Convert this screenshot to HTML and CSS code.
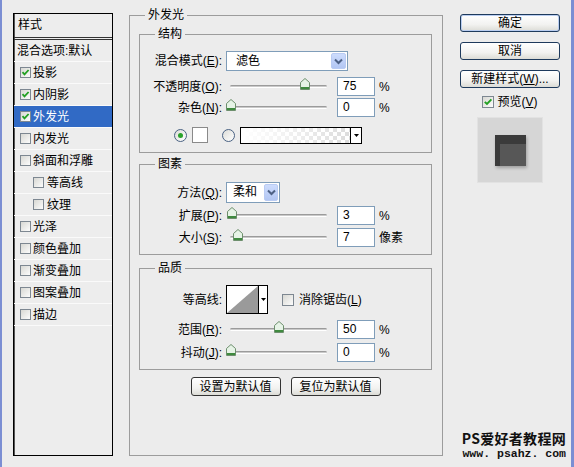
FILE: index.html
```html
<!DOCTYPE html>
<html lang="zh-CN">
<head>
<meta charset="utf-8">
<title>图层样式</title>
<link rel="stylesheet" href="styles.css">
</head>
<body>
<div class="frame">
  <div class="dialog">
    <div class="styles-list">
      <div class="list-head">样式</div>
      <div class="list-row plain">混合选项:默认</div>
      <div class="list-row"><span class="cb"><svg width="9" height="9" viewBox="0 0 9 9"><polyline points="1.5,4.2 3.5,6.4 7.6,2" fill="none" stroke="#22a022" stroke-width="1.8"/></svg></span>投影</div>
      <div class="list-row"><span class="cb"><svg width="9" height="9" viewBox="0 0 9 9"><polyline points="1.5,4.2 3.5,6.4 7.6,2" fill="none" stroke="#22a022" stroke-width="1.8"/></svg></span>内阴影</div>
      <div class="list-row selected"><span class="cb"><svg width="9" height="9" viewBox="0 0 9 9"><polyline points="1.5,4.2 3.5,6.4 7.6,2" fill="none" stroke="#22a022" stroke-width="1.8"/></svg></span>外发光</div>
      <div class="list-row"><span class="cb"></span>内发光</div>
      <div class="list-row"><span class="cb"></span>斜面和浮雕</div>
      <div class="list-row sub"><span class="cb"></span>等高线</div>
      <div class="list-row sub"><span class="cb"></span>纹理</div>
      <div class="list-row"><span class="cb"></span>光泽</div>
      <div class="list-row"><span class="cb"></span>颜色叠加</div>
      <div class="list-row"><span class="cb"></span>渐变叠加</div>
      <div class="list-row"><span class="cb"></span>图案叠加</div>
      <div class="list-row"><span class="cb"></span>描边</div>
    </div>

    <fieldset class="outer">
      <legend>外发光</legend>

      <fieldset class="inner struct">
        <legend>结构</legend>
        <div class="row r-blend">
          <span class="lbl">混合模式(<u>E</u>):</span>
          <div class="select blend-select"><span class="val">滤色</span><span class="arr"><svg width="9" height="7" viewBox="0 0 9 7"><polyline points="1,1.5 4.5,5 8,1.5" fill="none" stroke="#4d6185" stroke-width="2"/></svg></span></div>
        </div>
        <div class="row r-opacity">
          <span class="lbl">不透明度(<u>O</u>):</span>
          <div class="slider"><div class="track"></div><svg class="thumb" style="left:74px" width="10" height="12" viewBox="0 0 10 12"><path d="M5 0.5 L9.5 4.5 V11.5 H0.5 V4.5 Z" fill="#e6f3e6" stroke="#6d8f6d"/><rect x="1" y="9" width="8" height="2" fill="#3f8a3f"/></svg></div>
          <div class="num">75</div><span class="unit">%</span>
        </div>
        <div class="row r-noise">
          <span class="lbl">杂色(<u>N</u>):</span>
          <div class="slider"><div class="track"></div><svg class="thumb" style="left:0px" width="10" height="12" viewBox="0 0 10 12"><path d="M5 0.5 L9.5 4.5 V11.5 H0.5 V4.5 Z" fill="#e6f3e6" stroke="#6d8f6d"/><rect x="1" y="9" width="8" height="2" fill="#3f8a3f"/></svg></div>
          <div class="num">0</div><span class="unit">%</span>
        </div>
        <div class="row r-color">
          <span class="radio on"><span class="dot"></span></span>
          <span class="color-swatch"></span>
          <span class="radio"></span>
          <span class="gradient"><span class="grad-fill"></span><span class="grad-arrow"><svg width="5" height="3" viewBox="0 0 5 3"><polygon points="0,0 5,0 2.5,3" fill="#000"/></svg></span></span>
        </div>
      </fieldset>

      <fieldset class="inner elements">
        <legend>图素</legend>
        <div class="row r-method">
          <span class="lbl">方法(<u>Q</u>):</span>
          <div class="select method-select"><span class="val">柔和</span><span class="arr"><svg width="9" height="7" viewBox="0 0 9 7"><polyline points="1,1.5 4.5,5 8,1.5" fill="none" stroke="#4d6185" stroke-width="2"/></svg></span></div>
        </div>
        <div class="row r-spread">
          <span class="lbl">扩展(<u>P</u>):</span>
          <div class="slider"><div class="track"></div><svg class="thumb" style="left:1px" width="10" height="12" viewBox="0 0 10 12"><path d="M5 0.5 L9.5 4.5 V11.5 H0.5 V4.5 Z" fill="#e6f3e6" stroke="#6d8f6d"/><rect x="1" y="9" width="8" height="2" fill="#3f8a3f"/></svg></div>
          <div class="num">3</div><span class="unit">%</span>
        </div>
        <div class="row r-size">
          <span class="lbl">大小(<u>S</u>):</span>
          <div class="slider"><div class="track"></div><svg class="thumb" style="left:7px" width="10" height="12" viewBox="0 0 10 12"><path d="M5 0.5 L9.5 4.5 V11.5 H0.5 V4.5 Z" fill="#e6f3e6" stroke="#6d8f6d"/><rect x="1" y="9" width="8" height="2" fill="#3f8a3f"/></svg></div>
          <div class="num">7</div><span class="unit">像素</span>
        </div>
      </fieldset>

      <fieldset class="inner quality">
        <legend>品质</legend>
        <div class="row r-contour">
          <span class="lbl">等高线:</span>
          <span class="contour"><svg class="curve" width="31" height="27" viewBox="0 0 31 27"><polygon points="0,27 31,0 31,27" fill="#9a9a9a"/></svg><span class="contour-arrow"><svg width="5" height="3" viewBox="0 0 5 3"><polygon points="0,0 5,0 2.5,3" fill="#000"/></svg></span></span>
          <span class="cb big aa"></span><span class="aa-text">消除锯齿(<u>L</u>)</span>
        </div>
        <div class="row r-range">
          <span class="lbl">范围(<u>R</u>):</span>
          <div class="slider"><div class="track"></div><svg class="thumb" style="left:48px" width="10" height="12" viewBox="0 0 10 12"><path d="M5 0.5 L9.5 4.5 V11.5 H0.5 V4.5 Z" fill="#e6f3e6" stroke="#6d8f6d"/><rect x="1" y="9" width="8" height="2" fill="#3f8a3f"/></svg></div>
          <div class="num">50</div><span class="unit">%</span>
        </div>
        <div class="row r-jitter">
          <span class="lbl">抖动(<u>J</u>):</span>
          <div class="slider"><div class="track"></div><svg class="thumb" style="left:0px" width="10" height="12" viewBox="0 0 10 12"><path d="M5 0.5 L9.5 4.5 V11.5 H0.5 V4.5 Z" fill="#e6f3e6" stroke="#6d8f6d"/><rect x="1" y="9" width="8" height="2" fill="#3f8a3f"/></svg></div>
          <div class="num">0</div><span class="unit">%</span>
        </div>
      </fieldset>

      <div class="default-buttons">
        <button class="btn">设置为默认值</button>
        <button class="btn">复位为默认值</button>
      </div>
    </fieldset>

    <div class="side">
      <button class="btn side-btn primary">确定</button>
      <button class="btn side-btn">取消</button>
      <button class="btn side-btn new-style">新建样式(<u>W</u>)...</button>
      <div class="preview-toggle"><span class="cb big"><svg width="10" height="10" viewBox="0 0 10 10"><polyline points="1.8,4.8 4,7 8.4,2.4" fill="none" stroke="#22a022" stroke-width="1.9"/></svg></span><span>预览(<u>V</u>)</span></div>
      <div class="preview-box"><div class="preview-square"><div class="preview-inner"></div></div></div>
    </div>
  </div>

  <div class="watermark"><div class="wm1">PS爱好者教程网</div><div class="wm2">www. psahz. com</div></div>
</div>
</body>
</html>
```

FILE: styles.css
```css
* { box-sizing: border-box; }
html, body { margin: 0; padding: 0; }
body {
  width: 574px;
  height: 467px;
  overflow: hidden;
  background: #ececec;
  color: #000;
  font: 12px/14px "Liberation Sans", "Noto Sans CJK SC", sans-serif;
}
u { text-decoration: underline; text-underline-offset: 1px; }

.frame {
  position: relative;
  height: 467px;
  border-left: 2px solid #7b8ed3;
  border-right: 3px solid #7b8ed3;
  background: #ececec;
}

.dialog {
  display: flex;
  align-items: flex-start;
  padding: 8px 0 0 11px;
}

/* left style list */
.styles-list {
  flex: none;
  width: 100px;
  height: 443px;
  margin-top: 5px;
  border: 1px solid #000;
  box-shadow: inset 1px 0 0 #555;
  background: #ededed;
}
.list-head {
  height: 26px;
  line-height: 23px;
  padding-left: 4px;
  border-bottom: 3px double #333;
}
.list-row {
  display: flex;
  align-items: center;
  gap: 2px;
  height: 22px;
  padding-left: 6px;
  border-bottom: 1px solid #fafafa;
  white-space: nowrap;
}
.list-row.plain { padding-left: 3px; }
.list-row.sub { padding-left: 19px; gap: 3px; }
.list-row.selected { background: #316ac5; color: #fff; }

.cb {
  flex: none;
  display: inline-flex;
  align-items: center;
  justify-content: center;
  width: 11px;
  height: 11px;
  border: 1px solid #7d8791;
  background: linear-gradient(135deg, #d8d8d3, #fcfcfc);
}
.cb svg { display: block; }
.cb.big { width: 12px; height: 12px; }

/* group boxes */
fieldset {
  margin: 0;
  padding: 0;
  min-width: 0;
  border: 1px solid #9c9c9c;
}
legend {
  margin-left: 15px;
  padding: 0 3px;
  line-height: 14px;
}
.outer {
  flex: none;
  width: 314px;
  height: 448px;
  margin-left: 16px;
  padding: 0 10px 0 9px;
}
.outer > legend { margin-left: 6px; }
.inner { padding: 0 0 8px 0; }
.struct { margin-top: 5px; }
.elements { margin-top: 4px; padding-bottom: 7px; }
.quality { margin-top: 6px; padding-bottom: 7px; }

.row {
  display: flex;
  align-items: center;
  height: 19px;
  white-space: nowrap;
}
.lbl {
  flex: none;
  width: 82px;
  margin-right: 4px;
  text-align: right;
}

.r-blend { margin-top: 10px; height: 20px; }
.r-opacity { margin-top: 6px; }
.r-noise { margin-top: 2px; }
.r-color { margin-top: 9px; height: 18px; padding-left: 34px; }
.r-method { margin-top: 11px; height: 21px; }
.r-spread { margin-top: 3px; }
.r-size { margin-top: 3px; }
.r-contour { margin-top: 10px; height: 29px; }
.r-range { margin-top: 6px; }
.r-jitter { margin-top: 4px; }

/* select */
.select {
  flex: none;
  display: flex;
  height: 20px;
  border: 1px solid #7f9db9;
  background: #fff;
}
.select .val { flex: 1; padding-left: 9px; line-height: 18px; }
.select .arr {
  flex: none;
  display: flex;
  align-items: center;
  justify-content: center;
  width: 15px;
  margin: 1px;
  border-radius: 2px;
  background: linear-gradient(#cddcfd, #b2c6f3);
  border: 1px solid #b9cbf3;
}
.blend-select { width: 122px; }
.method-select { width: 54px; height: 21px; }
.method-select .val { padding-left: 6px; line-height: 19px; }
.method-select .arr { width: 14px; }

/* slider */
.slider {
  flex: none;
  position: relative;
  display: flex;
  align-items: center;
  width: 107px;
  height: 19px;
  padding: 0 6px 0 4px;
}
.track {
  flex: 1;
  height: 3px;
  border-top: 1px solid #9b9b9b;
  border-bottom: 1px solid #ffffff;
  background: #c9c9c9;
  border-radius: 2px;
}
.thumb {
  position: absolute;
  top: 1px;
  display: block;
}

.num {
  flex: none;
  width: 38px;
  height: 19px;
  margin-left: 4px;
  padding-left: 5px;
  line-height: 17px;
  border: 1px solid #7f9db9;
  background: #fff;
}
.unit { margin-left: 4px; }

/* color row */
.radio {
  flex: none;
  display: inline-flex;
  align-items: center;
  justify-content: center;
  width: 13px;
  height: 13px;
  border-radius: 50%;
  border: 1px solid #4a6283;
  background: linear-gradient(135deg, #dcdcd7, #ffffff);
}
.radio .dot {
  width: 5px;
  height: 5px;
  border-radius: 50%;
  background: #2aa22a;
}
.color-swatch {
  flex: none;
  width: 16px;
  height: 16px;
  margin: 0 14px 0 5px;
  border: 1px solid #8a8a8a;
  background: #fff;
}
.gradient {
  flex: none;
  display: flex;
  width: 122px;
  height: 17px;
  margin-left: 5px;
  border: 1px solid #000;
  background: #fff;
}
.grad-fill {
  flex: 1;
  background:
    linear-gradient(to right, #fff 0%, rgba(255,255,255,0.6) 45%, rgba(255,255,255,0) 100%),
    repeating-conic-gradient(#dcdcdc 0% 25%, #ffffff 0% 50%) 0 0 / 8px 8px;
}
.grad-arrow {
  flex: none;
  display: flex;
  align-items: center;
  justify-content: center;
  width: 11px;
  border-left: 1px solid #000;
}

/* contour */
.contour {
  flex: none;
  display: flex;
  width: 42px;
  height: 29px;
  border: 1px solid #000;
  background: #fff;
}
.curve { display: block; flex: none; }
.contour-arrow {
  flex: none;
  display: flex;
  align-items: center;
  justify-content: center;
  width: 9px;
  border-left: 1px solid #000;
}
.aa { margin-left: 14px; }
.aa-text { margin-left: 5px; }

/* buttons */
.btn {
  display: block;
  height: 19px;
  padding: 0;
  border: 1px solid #333;
  border-radius: 3px;
  background: linear-gradient(#ffffff, #f2f2f0 60%, #dcdcd6);
  font: 12px/14px "Liberation Sans", "Noto Sans CJK SC", sans-serif;
  color: #000;
}
.default-buttons {
  display: flex;
  justify-content: center;
  gap: 10px;
  margin-top: 7px;
}
.default-buttons .btn { width: 90px; }

.side {
  flex: none;
  display: flex;
  flex-direction: column;
  align-items: center;
  width: 100px;
  margin-left: 17px;
  padding-top: 6px;
}
.side-btn {
  width: 100px;
  height: 18px;
  margin-bottom: 10px;
  border-color: #1e3a5c;
}
.side-btn.primary { box-shadow: inset 0 0 0 1px #b9cdf0; }
.side-btn.new-style { margin-bottom: 7px; }

.preview-toggle {
  display: flex;
  align-items: center;
  gap: 3px;
  height: 14px;
}
.preview-box {
  display: flex;
  align-items: center;
  justify-content: center;
  width: 66px;
  height: 66px;
  margin-top: 8px;
  border: 1px solid #e2e2e2;
  background: #d6d6d6;
}
.preview-square {
  display: flex;
  width: 31px;
  height: 31px;
  padding: 9px 0 0 5px;
  background: #3b3b3b;
  box-shadow: 1px 2px 3px rgba(0,0,0,0.25);
}
.preview-inner { flex: 1; background: #575757; }

/* watermark overlay */
.watermark {
  position: absolute;
  right: 5px;
  top: 431px;
  text-align: right;
  font-weight: bold;
  color: #111;
}
.wm1 { font: bold 14px/15px "Noto Sans CJK SC", sans-serif; letter-spacing: 0.3px; }
.wm2 { font: bold 11.5px/15px "Liberation Mono", monospace; }
```
